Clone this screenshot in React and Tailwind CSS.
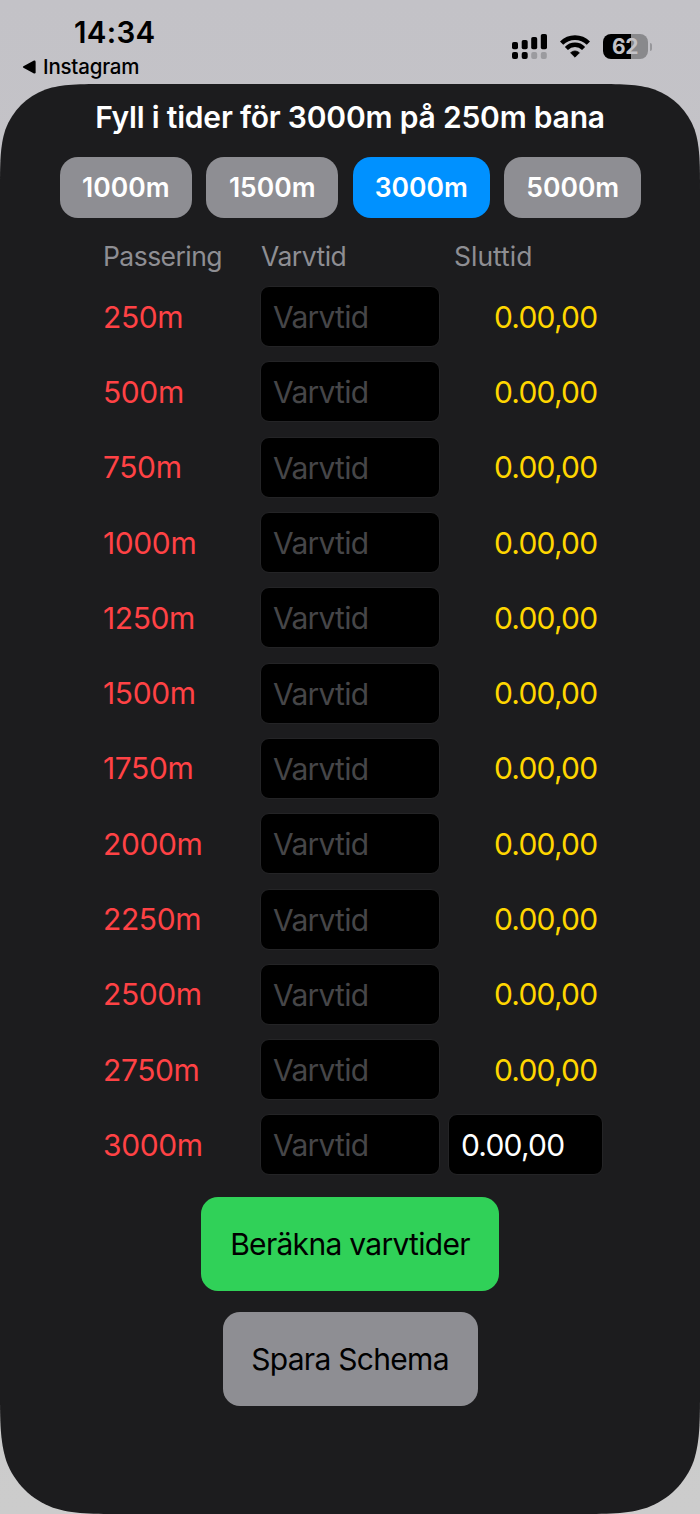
/**
 * Lap Schedule Screen
 * Lap time entry form for a chosen race distance
 */

import React, { useState } from 'react';

const DISTANCES = [
  { label: '1000m', width: 'w-[132px]' },
  { label: '1500m', width: 'w-[132px]' },
  { label: '3000m', width: 'w-[137px]' },
  { label: '5000m', width: 'w-[137px]' },
];

const LAPS = [250, 500, 750, 1000, 1250, 1500, 1750, 2000, 2250, 2500, 2750, 3000];

const SignalIcon = () => (
  <svg width="36" height="26" viewBox="0 0 36 26" className="shrink-0">
    <rect x="0" y="8" width="6" height="7.2" rx="1.8" />
    <rect x="9.7" y="6" width="6" height="9.2" rx="1.8" />
    <rect x="19.2" y="3" width="6" height="12.2" rx="1.8" />
    <rect x="28.8" y="0" width="6.2" height="15.2" rx="1.8" />
    <rect x="0" y="18" width="6" height="7" rx="2" />
    <rect x="9.7" y="18" width="6" height="7" rx="2" />
    <rect x="19.2" y="18" width="6" height="7" rx="2" fill="#9b9b9f" />
    <rect x="28.8" y="18" width="6" height="7" rx="2" fill="#9b9b9f" />
  </svg>
);

const WifiIcon = () => (
  <svg width="30" height="23" viewBox="0 0 30 23" className="shrink-0">
    <path d="M1.6 8.2 A19 19 0 0 1 28.4 8.2" fill="none" stroke="#000" strokeWidth="4.6" />
    <path d="M6.4 13.4 A12 12 0 0 1 23.6 13.4" fill="none" stroke="#000" strokeWidth="4.3" />
    <path d="M15 22.2 L10.6 17.8 A6.2 6.2 0 0 1 19.4 17.8 Z" stroke="#000" strokeWidth="0.8" strokeLinejoin="round" />
  </svg>
);

const Battery = () => (
  <div className="flex items-center gap-[2px]">
    <div className="flex h-[25px] w-[45px] items-center justify-center rounded-[8px] bg-[linear-gradient(90deg,#000_63%,#89898c_63%)] text-[21px] leading-none font-bold tracking-[-0.5px] text-[#c3c2c7]">
      62
    </div>
    <div className="h-[8px] w-[2.5px] rounded-r-full bg-[#97979b]" />
  </div>
);

const StatusBar = () => (
  <header className="flex h-[84px] justify-between text-black">
    <div className="flex flex-col">
      <span className="mt-[14px] ml-[74px] h-[36px] text-[29.5px] leading-[36px] font-semibold tracking-[0.3px]">14:34</span>
      <div className="mt-[4px] ml-[22px] flex h-[26px] items-center">
        <svg width="14" height="14" viewBox="0 0 14 14" className="mr-[7px]">
          <path d="M1.4 6.2 L12 0.6 Q13.6 0.2 13.6 1.8 V12.2 Q13.6 13.8 12 13.4 L1.4 7.8 Q0.2 7 1.4 6.2 Z" />
        </svg>
        <span className="text-[20.5px] leading-[26px] font-medium tracking-[-0.2px]">Instagram</span>
      </div>
    </div>
    <div className="mt-[34px] mr-[48px] flex h-[25px] items-center">
      <SignalIcon />
      <div className="ml-[12px]"><WifiIcon /></div>
      <div className="ml-[13px]"><Battery /></div>
    </div>
  </header>
);

const fieldClass =
  'h-[61px] shrink-0 rounded-[9px] border border-[#242426] bg-black pt-px pl-[12px] text-[30px] text-white outline-none placeholder:text-[#464648] placeholder:opacity-100';

const LapRow = ({ meters, last }) => (
  <div className="flex h-[60px] items-center">
    <span className="w-[157px] shrink-0 pt-px text-[30px] tracking-[-0.4px] text-[#ff4245]">{meters}m</span>
    <input className={`w-[180px] tracking-[-0.75px] ${fieldClass}`} placeholder="Varvtid" />
    {last ? (
      <input className={`ml-[8px] w-[155px] tracking-[-0.8px] ${fieldClass}`} defaultValue="0.00,00" />
    ) : (
      <span className="ml-[54px] pt-px text-[30px] tracking-[-0.8px] text-[#ffd600]">0.00,00</span>
    )}
  </div>
);

const App = () => {
  const [selected, setSelected] = useState('3000m');

  return (
    <div className="h-[1514px] w-[700px] overflow-hidden bg-gradient-to-b from-[#c3c2c7] to-[#cccccc] font-['Inter',sans-serif]">
      <StatusBar />
      <main className="flex h-[1430px] flex-col items-center bg-[#1c1c1e] [clip-path:path('M0_110C0_78.4_0_62.5_5.4_45.5C12.2_26.8_26.8_12.2_45.5_5.4C62.5_0_78.4_0_110_0H590C621.6_0_637.5_0_654.5_5.4C673.2_12.2_687.8_26.8_694.6_45.5C700_62.5_700_78.4_700_110V1301.6C700_1338.6_700_1357_693.7_1377C685.8_1398.7_668.7_1415.8_647_1423.7C627_1430_608.6_1430_571.6_1430H128.4C91.4_1430_73_1430_53_1423.7C31.3_1415.8_14.2_1398.7_6.3_1377C0_1357_0_1338.6_0_1301.6Z')]">
        <h1 className="mt-[15px] h-[37px] text-[30px] leading-[37px] font-semibold tracking-[-0.2px] whitespace-nowrap text-white">
          Fyll i tider för {selected} på 250m bana
        </h1>

        <div className="mt-[21px] flex h-[60px] gap-[14.5px] pl-px">
          {DISTANCES.map(({ label, width }) => (
            <button
              key={label}
              onClick={() => setSelected(label)}
              className={`${width} h-[61px] rounded-[18px] pt-px text-[26.5px] font-semibold text-white ${
                label === selected ? 'bg-[#0091ff]' : 'bg-[#8e8e93]'
              }`}
            >
              {label}
            </button>
          ))}
        </div>

        <div className="w-[500px] pl-[3px]">
          <div className="mt-[22px] flex h-[34px] text-[26.5px] leading-[34px] text-[#8e8e93]">
            <span className="w-[158px] tracking-[-0.55px]">Passering</span>
            <span className="w-[193px] tracking-[-0.5px]">Varvtid</span>
            <span>Sluttid</span>
          </div>

          <div className="mt-[13.7px] flex flex-col gap-[15.3px]">
            {LAPS.map((meters, i) => (
              <LapRow key={meters} meters={meters} last={i === LAPS.length - 1} />
            ))}
          </div>
        </div>

        <button className="mt-[22px] h-[94px] w-[298px] shrink-0 rounded-[17px] bg-[#30d158] pt-[2px] text-[30px] tracking-[-0.7px] text-black">
          Beräkna varvtider
        </button>
        <button className="mt-[21.5px] h-[94px] w-[255px] shrink-0 rounded-[17px] bg-[#8e8e93] pt-px text-[30px] tracking-[-0.7px] text-black">
          Spara Schema
        </button>
      </main>
    </div>
  );
};

export default App;
